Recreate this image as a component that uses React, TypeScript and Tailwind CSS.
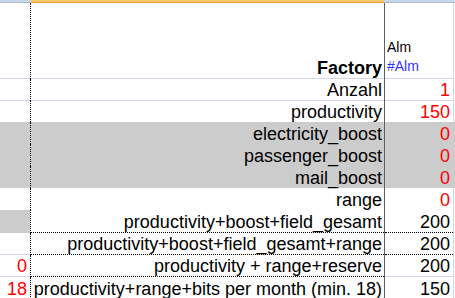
import React from "react";

type B = "light" | "dotted" | "none";

const bcls = (b: B) =>
  b === "light"
    ? "border-b border-[#d0d7e5]"
    : b === "dotted"
    ? "border-b border-dotted border-black"
    : "";

type RowProps = {
  h: string;
  gray?: boolean;
  leftGray?: boolean;
  left?: React.ReactNode;
  main?: React.ReactNode;
  bold?: boolean;
  alm?: React.ReactNode;
  almRed?: boolean;
  lb?: B;
  mb?: B;
  ab?: B;
};

function Row({ h, gray, leftGray, left, main, bold, alm, almRed, lb = "none", mb = "none", ab = "none" }: RowProps) {
  const bg = gray ? "bg-[#cccccc]" : "bg-white";
  return (
    <div className={`flex ${h} ${bg}`}>
      <div
        className={`w-[30px] shrink-0 flex items-end justify-end pr-[3px] pb-px leading-[18px] text-[18px] text-[#ff0000] ${bcls(lb)} ${
          leftGray ? "bg-[#cccccc]" : ""
        }`}
      >
        {left}
      </div>
      <div className="w-px shrink-0 border-l border-dotted border-black" />
      <div
        className={`w-[353px] shrink-0 flex items-end justify-end pr-[2px] pb-px leading-[18px] text-[18px] text-black whitespace-nowrap ${
          bold ? "font-bold" : ""
        } ${bcls(mb)}`}
      >
        {main}
      </div>
      <div className="w-px shrink-0 bg-[#5f5f5f]" />
      <div
        className={`w-[68px] shrink-0 flex items-end justify-end pr-[3px] pb-px leading-[18px] text-[18px] ${
          almRed ? "text-[#ff0000]" : "text-black"
        } ${bcls(ab)}`}
      >
        {alm}
      </div>
      <div className={`w-px shrink-0 ${gray ? "bg-[#cccccc]" : "bg-[#d0d7e5]"}`} />
      <div className="w-px shrink-0" />
    </div>
  );
}

export default function App() {
  return (
    <div className="w-[455px] h-[298px] overflow-hidden bg-white font-['Liberation_Sans',Arial,sans-serif]">
      {/* column header strip */}
      <div className="flex h-[3px]">
        <div className="w-[31px] h-full flex flex-col">
          <div className="h-[2px] bg-[#c9d7ea]" />
          <div className="h-px bg-[#a7bcd8]" />
        </div>
        <div className="w-[353px] h-full flex flex-col">
          <div className="h-[2px] bg-[#fbc468]" />
          <div className="h-px bg-[#f2a640]" />
        </div>
        <div className="w-[71px] h-full flex flex-col">
          <div className="h-[2px] bg-[#c9d7ea]" />
          <div className="h-px bg-[#a7bcd8]" />
        </div>
      </div>

      {/* header row */}
      <div className="flex h-[76px] bg-white">
        <div className="w-[30px] shrink-0 border-b border-[#d0d7e5]" />
        <div className="w-px shrink-0 border-l border-dotted border-black" />
        <div className="w-[353px] shrink-0 flex items-end justify-end pr-[2px] pb-px leading-[18px] text-[18px] font-bold text-black border-b border-[#d0d7e5]">
          Factory
        </div>
        <div className="w-px shrink-0 bg-[#5f5f5f]" />
        <div className="w-[68px] shrink-0 flex flex-col justify-end pl-[2px] pb-[2px] text-[14px] leading-[19px] border-b border-[#d0d7e5]">
          <div className="text-black">Alm</div>
          <div className="text-[#3333ff]">#Alm</div>
        </div>
        <div className="w-px shrink-0 bg-[#d0d7e5]" />
        <div className="w-px shrink-0" />
      </div>

      <Row h="h-[22px]" main="Anzahl" alm="1" almRed lb="light" mb="light" ab="light" />
      <Row h="h-[21px]" main="productivity" alm="150" almRed />
      <Row h="h-[22px]" gray main="electricity_boost" alm="0" almRed />
      <Row h="h-[22px]" gray main="passenger_boost" alm="0" almRed />
      <Row h="h-[22px]" gray main="mail_boost" alm="0" almRed />
      <Row h="h-[22px]" main="range" alm="0" almRed />
      <Row h="h-[23px]" leftGray main="productivity+boost+field_gesamt" alm="200" mb="dotted" ab="dotted" />
      <Row h="h-[22px]" main="productivity+boost+field_gesamt+range" alm="200" lb="light" mb="dotted" ab="dotted" />
      <Row h="h-[22px]" left="0" main="productivity + range+reserve" alm="200" lb="light" mb="dotted" ab="light" />
      <Row h="h-[22px]" left="18" main="productivity+range+bits per month (min. 18)" alm="150" />
    </div>
  );
}
